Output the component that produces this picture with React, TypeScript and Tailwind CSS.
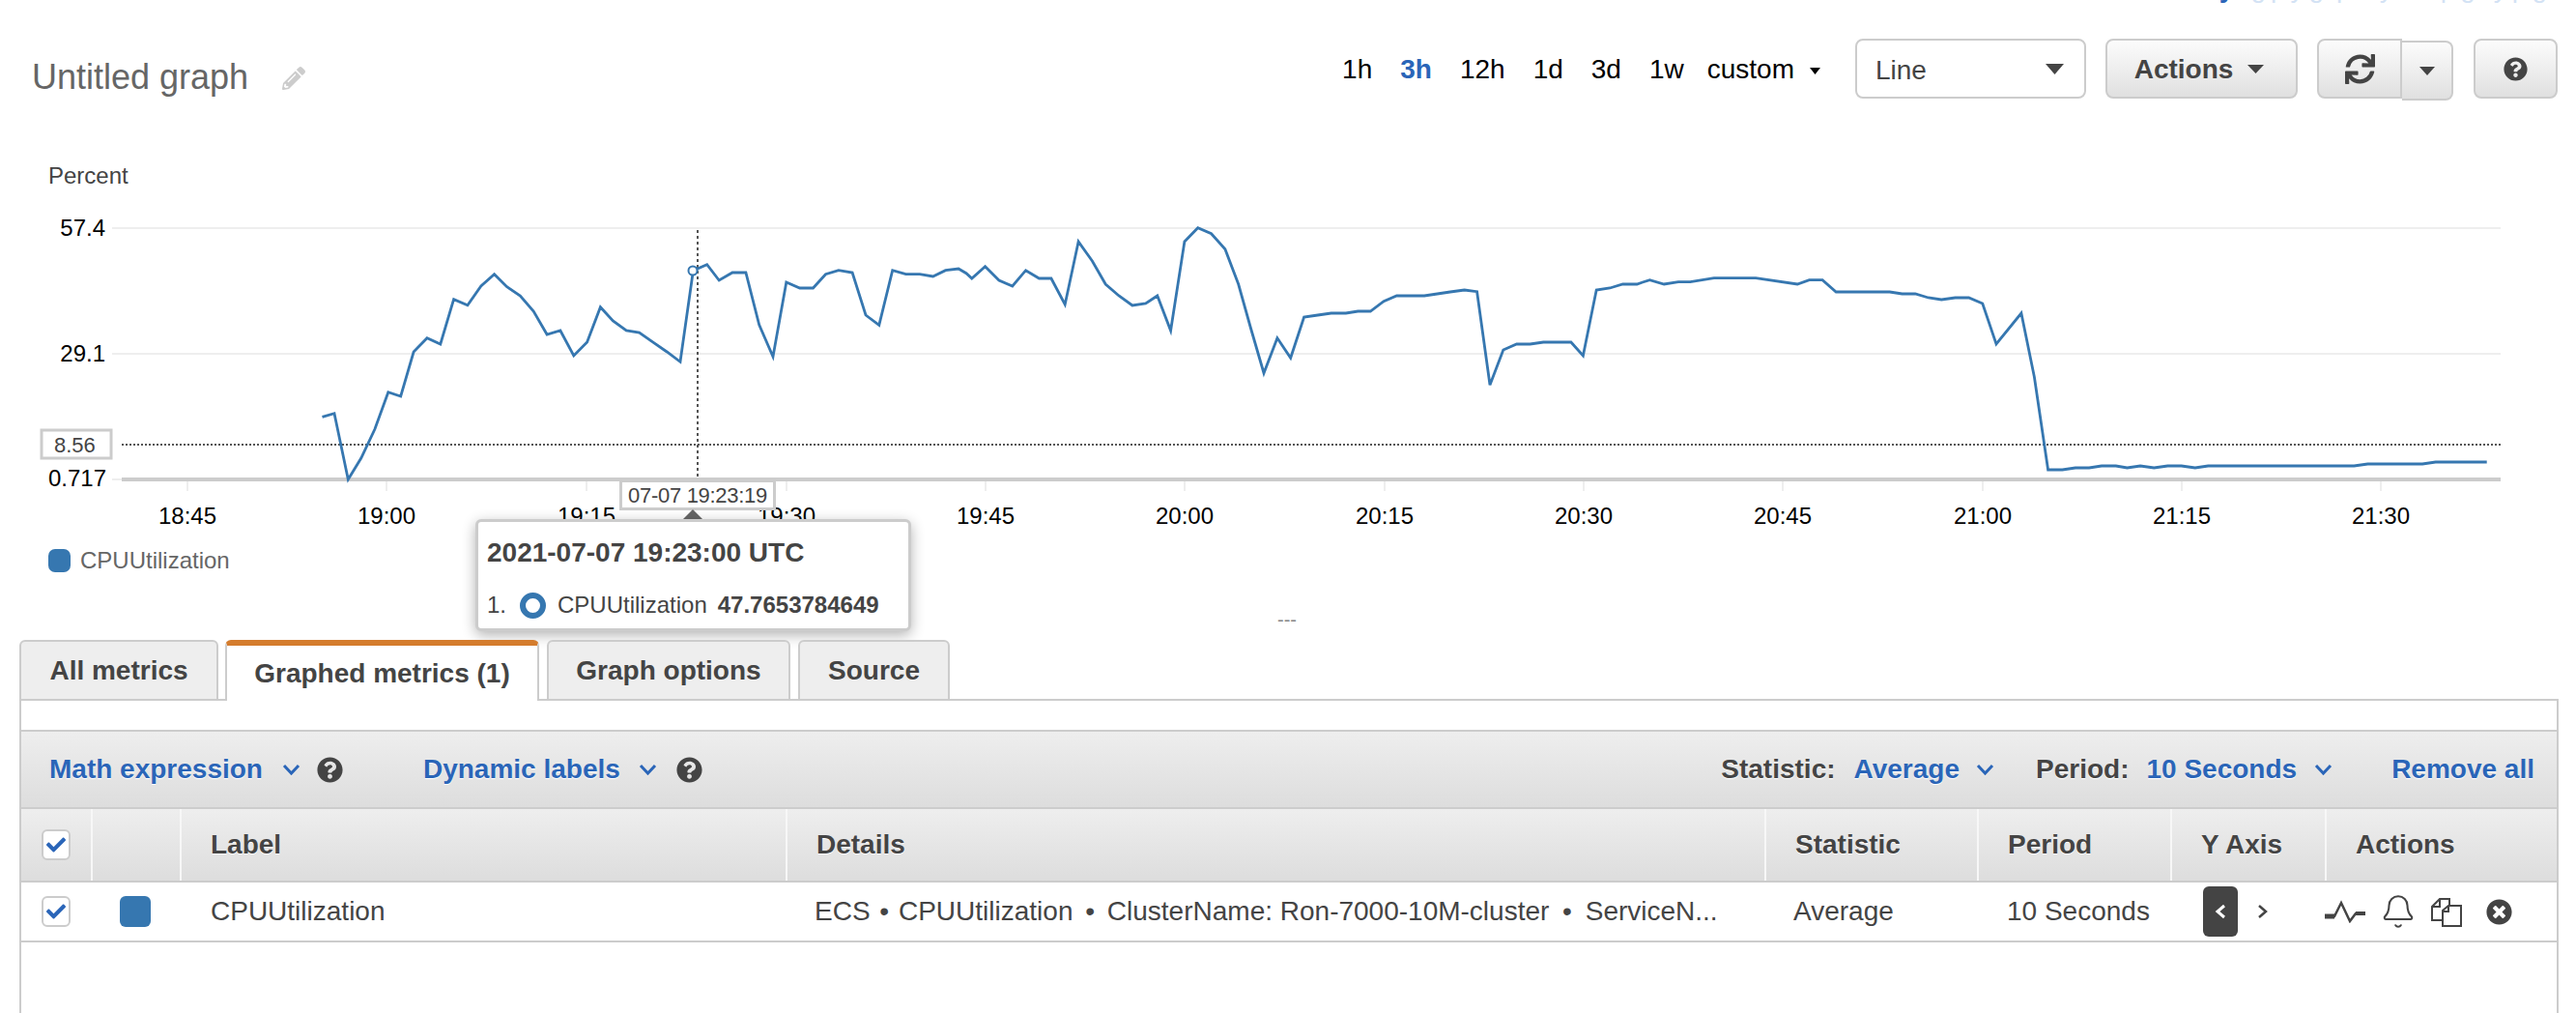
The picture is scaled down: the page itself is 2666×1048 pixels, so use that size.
import React from 'react';
import { Bell } from 'lucide-react';
import { FaCheck, FaPencilAlt, FaQuestionCircle, FaSync, FaTimesCircle } from 'react-icons/fa';

// traced from the reference, in page pixels once converted
const seg1 = [[75,634],[103,623],[135,828],[165,762],[197,672],[228,557],[257,570],[287,432],[318,389],[349,408],[380,269],[412,287],[443,228],[474,191],[503,230],[534,258],[565,306],[596,378],[627,366],[658,444],[689,402],[720,293],[749,336],[780,366],[810,372],[843,403],[874,432],[905,463],[935,180],[967,161],[995,210],[1026,186],[1057,186],[1088,348],[1120,447],[1151,216],[1182,234],[1213,234],[1242,191],[1272,179],[1304,186],[1335,318],[1366,349],[1397,179],[1428,191],[1460,191],[1491,198],[1520,179],[1550,174]];
const seg2 = [[0,188],[13,204],[44,167],[76,210],[107,228],[138,179],[169,204],[197,204],[229,285],[260,90],[292,150],[323,222],[354,258],[385,288],[416,282],[443,258],[474,366],[506,90],[537,47],[568,65],[600,113],[631,222],[660,360],[690,498],[721,389],[752,451],[783,324],[815,318],[846,312],[880,312],[908,306],[937,306],[968,275],[998,258],[1030,258],[1062,258],[1092,252],[1122,246],[1155,240],[1184,245],[1214,535],[1245,426],[1276,408],[1307,408],[1338,402],[1370,402],[1402,402],[1430,444],[1461,240],[1492,234],[1522,222],[1555,222]];
const seg3 = [[0,216],[12,209],[36,222],[60,215],[80,215],[120,203],[190,203],[260,222],[280,209],[302,209],[325,246],[415,246],[436,252],[458,252],[480,264],[502,270],[525,264],[548,264],[571,282],[594,408],[636,312],[658,510],[681,798],[705,798],[727,792],[750,792],[771,786],[795,786],[814,792],[836,786],[859,792],[882,786],[905,786],[928,792],[950,786],[1195,786],[1218,780],[1310,780],[1332,774],[1418,774]];

const linePoints = [
  ...seg1.map(([x, y]) => [x / 2.24 + 300, y / 3 + 220]),
  ...seg2.map(([x, y]) => [x / 2.24 + 1000, y / 3 + 220]),
  ...seg3.map(([x, y]) => [x / 1.623 + 1700, y / 3 + 220]),
]
  .map(([x, y]) => `${x.toFixed(1)},${y.toFixed(1)}`)
  .join(' ');

const ticks = [
  [194, '18:45'],
  [400, '19:00'],
  [607, '19:15'],
  [814, '19:30'],
  [1020, '19:45'],
  [1226, '20:00'],
  [1433, '20:15'],
  [1639, '20:30'],
  [1845, '20:45'],
  [2052, '21:00'],
  [2258, '21:15'],
  [2464, '21:30'],
] as const;

function Caret({ w, h, className = '' }: { w: number; h: number; className?: string }) {
  return (
    <svg width={w} height={h} viewBox="0 0 10 10" preserveAspectRatio="none" className={className}>
      <polygon points="0,0 10,0 5,10" fill="currentColor" />
    </svg>
  );
}

function Chevron() {
  return (
    <svg width="19" height="12" viewBox="0 0 19 12" className="text-[#2a65b8]">
      <polyline points="2,2 9.5,10 17,2" fill="none" stroke="currentColor" strokeWidth="3" />
    </svg>
  );
}

function Chart() {
  return (
    <svg width="2666" height="450" viewBox="0 104 2666 450" className="block">
      <g fontFamily="'Liberation Sans', Arial, sans-serif" fontSize="24">
        <text x="50" y="190" fill="#444">Percent</text>
        <text x="109" y="244" fill="#000" textAnchor="end">57.4</text>
        <text x="109" y="374" fill="#000" textAnchor="end">29.1</text>
        <text x="110" y="503" fill="#000" textAnchor="end">0.717</text>
        {ticks.map(([x, label]) => (
          <text key={label} x={x} y="542" fill="#000" textAnchor="middle">{label}</text>
        ))}
      </g>
      <line x1="116" y1="236" x2="2588" y2="236" stroke="#eee" strokeWidth="2" />
      <line x1="116" y1="366" x2="2588" y2="366" stroke="#eee" strokeWidth="2" />
      <line x1="116" y1="496" x2="126" y2="496" stroke="#eee" strokeWidth="2" />
      <line x1="126" y1="496" x2="2588" y2="496" stroke="#ccc" strokeWidth="4" />
      {ticks.map(([x, label]) => (
        <line key={label} x1={x} y1="498" x2={x} y2="508" stroke="#eee" strokeWidth="2" />
      ))}
      <line x1="126" y1="460" x2="2588" y2="460" stroke="#555" strokeWidth="2" strokeDasharray="2 2" />
      <line x1="722" y1="238" x2="722" y2="494" stroke="#555" strokeWidth="2" strokeDasharray="3 3" />
      <polyline points={linePoints} fill="none" stroke="#3677b0" strokeWidth="2.8" strokeLinejoin="miter" />
      <circle cx="717" cy="280" r="4.5" fill="#fff" stroke="#3677b0" strokeWidth="2" />
      <rect x="43" y="445" width="72" height="29" fill="#fff" stroke="#ccc" strokeWidth="3" />
      <text x="56" y="468" fontFamily="'Liberation Sans', Arial, sans-serif" fontSize="22" fill="#444">8.56</text>
    </svg>
  );
}

function ToolButton({ className, children }: { className: string; children: React.ReactNode }) {
  return (
    <button
      type="button"
      className={`flex items-center justify-center rounded-[8px] border-2 border-[#ccc] bg-linear-to-b from-[#fcfcfc] to-[#e0e0e0] text-[#444] ${className}`}
    >
      {children}
    </button>
  );
}

function Checkbox() {
  return (
    <span className="flex h-[32px] w-[30px] items-center justify-center rounded-[6px] border-2 border-[#ccc] bg-white">
      <FaCheck className="h-[20px] w-[20px] text-[#2a65b8]" />
    </span>
  );
}

function CopyIcon() {
  return (
    <svg width="32" height="31" viewBox="0 0 32 31" fill="none" stroke="#444" strokeWidth="2">
      <path d="M11 24H1V10L9 2h10v8" />
      <path d="M9 2v8H1" />
      <path d="M12 30V14l6-5h13v21H12z" />
      <path d="M18 9v6h-6" />
    </svg>
  );
}

function PulseIcon() {
  return (
    <svg width="42" height="24" viewBox="0 0 42 24" fill="none" stroke="#444">
      <path d="M0 17h10L17 3l9 19 6-8h10" strokeWidth="2.5" />
      <path d="M0 17h10" strokeWidth="5" />
      <path d="M32 14h10" strokeWidth="4" />
    </svg>
  );
}

const HEAD_CELL = 'flex items-center border-l-2 border-[#f7f7f7] pl-[30px] text-[28px] font-bold text-[#444] [text-shadow:0_1px_0_#fff]';
const COLS = 'grid grid-cols-[72px_92px_627px_1013px_220px_200px_160px_1fr]';

export default function App() {
  return (
    <div className="relative h-[1048px] w-[2666px] overflow-hidden bg-white font-['Liberation_Sans',Arial,sans-serif]">
      {/* page content scrolled off the top, only descenders show */}
      <div className="h-[4px] overflow-hidden">
        <div className="-mt-[28px] flex h-[32px] items-end justify-end gap-[5px] pr-[30px] text-[28px] leading-[32px] text-[#d3e2f4]">
          <span className="mr-[12px] font-bold text-[#2a65b8]">y</span>
          <span>g</span><span>p</span><span>y</span><span className="mr-[8px]">g</span><span className="mr-[24px]">p</span>
          <span className="mr-[44px]">y</span><span>p</span><span className="mr-[14px]">g</span><span>y</span><span>p</span><span>g</span>
        </div>
      </div>

      <header className="flex h-[100px] items-start justify-between pt-[36px]">
        <div className="ml-[33px] mt-[18px] flex items-center gap-[35px]">
          <h1 className="text-[36px] font-normal leading-[44px] text-[#666]">Untitled graph</h1>
          <FaPencilAlt className="mt-[2px] h-[24px] w-[24px] text-[#ccc]" />
        </div>
        <div className="mr-[19px] flex items-start">
          <div className="mr-[36px] mt-[14px] flex items-center gap-[29px] text-[28px] leading-[36px] text-black">
            <span>1h</span>
            <span className="font-bold text-[#2a65b8]">3h</span>
            <span>12h</span>
            <span>1d</span>
            <span>3d</span>
            <span>1w</span>
            <span className="-ml-[5px] flex items-center gap-[16px]">
              custom
              <Caret w={11} h={7} className="mt-[3px]" />
            </span>
          </div>
          <div className="mr-[20px] flex h-[62px] w-[239px] items-center justify-between rounded-[8px] border-2 border-[#ccc] bg-white pl-[19px] pr-[21px] text-[28px] text-[#444]">
            <span className="mt-[4px]">Line</span>
            <Caret w={19} h={11} />
          </div>
          <ToolButton className="mr-[20px] h-[62px] w-[199px] gap-[15px] pr-[5px] text-[28px] font-bold">
            <span className="mt-[2px]">Actions</span>
            <Caret w={17} h={9} />
          </ToolButton>
          <ToolButton className="z-10 h-[62px] w-[88px] rounded-r-none">
            <FaSync className="h-[31px] w-[31px]" />
          </ToolButton>
          <ToolButton className="mr-[21px] mt-[2px] h-[62px] w-[53px] rounded-l-none border-l-0">
            <Caret w={16} h={9} />
          </ToolButton>
          <ToolButton className="h-[62px] w-[87px]">
            <FaQuestionCircle className="h-[25px] w-[25px]" />
          </ToolButton>
        </div>
      </header>

      <section className="relative h-[558px]">
        <Chart />
        <div className="ml-[50px] mt-[12px] flex items-center gap-[10px]">
          <span className="h-[24px] w-[23px] rounded-[7px] bg-[#3677b0]" />
          <span className="text-[24px] leading-[28px] text-[#666]">CPUUtilization</span>
        </div>

        {/* crosshair time label */}
        <div className="absolute left-[641px] top-[392px] flex h-[32px] w-[162px] items-center justify-center border-[3px] border-[#ccc] bg-white text-[22px] tracking-[-0.3px] text-[#444]">
          07-07 19:23:19
        </div>
        <Caret w={20} h={10} className="absolute left-[707px] top-[423px] rotate-180 text-[#666]" />

        <div className="absolute left-[492px] top-[433px] h-[116px] w-[451px] rounded-[6px] border-[3px] border-[#ccc] bg-white pl-[9px] text-[#444] shadow-[0_4px_14px_rgba(0,0,0,0.3)]">
          <div className="mt-[14px] text-[28px] font-bold leading-[36px]">2021-07-07 19:23:00 UTC</div>
          <div className="mt-[21px] flex items-center text-[24px] leading-[30px]">
            <span className="mr-[14px]">1.</span>
            <span className="mr-[12px] h-[27px] w-[27px] rounded-full border-[6px] border-[#3677b0]" />
            <span className="mr-[11px]">CPUUtilization</span>
            <span className="font-bold">47.7653784649</span>
          </div>
        </div>

        <div className="absolute left-[1322px] top-[527px] text-[20px] leading-[20px] text-[#888]">---</div>
      </section>

      <nav className="relative z-10 flex h-[63px] items-stretch gap-[8px] pl-[20px] text-[28px] font-bold text-[#444]">
        <div className="flex w-[206px] items-center justify-center rounded-t-[6px] border-2 border-[#ccc] bg-[#eee]">All metrics</div>
        <div className="-ml-[1px] flex w-[325px] items-center justify-center rounded-t-[6px] border-x-2 border-t-[6px] border-x-[#ccc] border-t-[#d47c2d] bg-white">Graphed metrics (1)</div>
        <div className="flex w-[252px] items-center justify-center rounded-t-[6px] border-2 border-[#ccc] bg-[#eee]">Graph options</div>
        <div className="flex w-[157px] items-center justify-center rounded-t-[6px] border-2 border-[#ccc] bg-[#eee]">Source</div>
      </nav>

      <main className="ml-[20px] -mt-[2px] h-[327px] w-[2628px] border-x-2 border-t-2 border-[#ccc] bg-white">
        <div className="h-[30px]" />

        <div className="flex h-[80px] items-center justify-between border-t-2 border-[#ccc] bg-linear-to-b from-[#eee] to-[#ddd] pl-[29px] pr-[23px] text-[28px] font-bold [text-shadow:0_1px_0_#fff]">
          <div className="flex items-center">
            <span className="mr-[20px] text-[#2a65b8]">Math expression</span>
            <Chevron />
            <FaQuestionCircle className="ml-[17px] mr-[83px] h-[27px] w-[27px] text-[#444]" />
            <span className="mr-[19px] text-[#2a65b8]">Dynamic labels</span>
            <Chevron />
            <FaQuestionCircle className="ml-[20px] h-[27px] w-[27px] text-[#444]" />
          </div>
          <div className="flex items-center">
            <span className="mr-[19px] text-[#444]">Statistic:</span>
            <span className="mr-[17px] text-[#2a65b8]">Average</span>
            <Chevron />
            <span className="ml-[43px] mr-[18px] text-[#444]">Period:</span>
            <span className="mr-[18px] text-[#2a65b8]">10 Seconds</span>
            <Chevron />
            <span className="ml-[61px] text-[#2a65b8]">Remove all</span>
          </div>
        </div>

        <div className={`${COLS} h-[76px] border-t-2 border-[#ccc] bg-linear-to-b from-[#eee] to-[#ddd]`}>
          <div className="flex items-center pl-[21px]">
            <Checkbox />
          </div>
          <div className={HEAD_CELL} />
          <div className={HEAD_CELL}>Label</div>
          <div className={HEAD_CELL}>Details</div>
          <div className={HEAD_CELL}>Statistic</div>
          <div className={HEAD_CELL}>Period</div>
          <div className={HEAD_CELL}>Y Axis</div>
          <div className={HEAD_CELL}>Actions</div>
        </div>

        <div className={`${COLS} h-[64px] border-y-2 border-[#ccc] text-[28px] text-[#444]`}>
          <div className="flex items-center pl-[21px]">
            <Checkbox />
          </div>
          <div className="flex items-center pl-[30px]">
            <span className="h-[32px] w-[32px] rounded-[6px] bg-[#3677b0]" />
          </div>
          <div className="flex items-center pl-[32px]">CPUUtilization</div>
          <div className="flex items-center whitespace-pre pl-[30px]">
            ECS <span className="mx-[2px]">•</span> CPUUtilization <span className="mx-[5px]">•</span> ClusterName: Ron-7000-10M-cluster <span className="mx-[6px]">•</span> ServiceN...
          </div>
          <div className="flex items-center pl-[30px]">Average</div>
          <div className="flex items-center pl-[31px]">10 Seconds</div>
          <div className="flex items-center pl-[34px]">
            <span className="flex h-[52px] w-[36px] items-center justify-center rounded-[6px] bg-[#444]">
              <svg width="12" height="16" viewBox="0 0 12 16">
                <polyline points="10,2 3,8 10,14" fill="none" stroke="#fff" strokeWidth="3" />
              </svg>
            </span>
            <svg width="12" height="16" viewBox="0 0 12 16" className="ml-[20px]">
              <polyline points="2,2 9,8 2,14" fill="none" stroke="#444" strokeWidth="2.5" />
            </svg>
          </div>
          <div className="flex items-center">
            <PulseIcon />
            <Bell className="ml-[15px] h-[38px] w-[38px] text-[#444]" strokeWidth={1.3} />
            <span className="ml-[15px]">
              <CopyIcon />
            </span>
            <FaTimesCircle className="ml-[25px] h-[27px] w-[27px] text-[#444]" />
          </div>
        </div>
      </main>
    </div>
  );
}
